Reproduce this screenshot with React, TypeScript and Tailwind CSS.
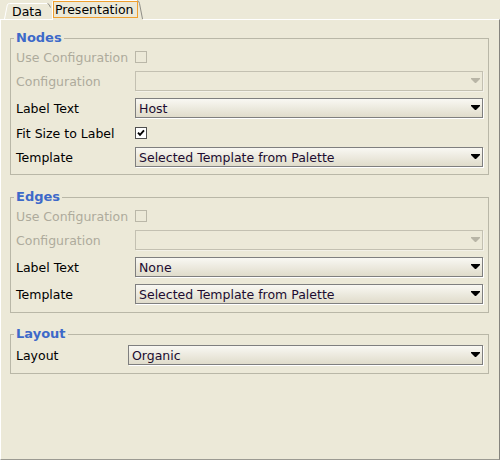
import React from 'react';

// Swing-style "Presentation" settings pane

function Arrow({ disabled }: { disabled?: boolean }) {
  return (
    <svg width="9" height="6" viewBox="0 0 9 6" className="shrink-0">
      <path d="M0 0H9V1L5 5H4L0 1Z" fill={disabled ? '#b8b5a6' : '#000000'} />
    </svg>
  );
}

function Combo({ value, disabled }: { value?: string; disabled?: boolean }) {
  return (
    <div
      className={`flex h-[20px] flex-1 items-center border pl-[3px] pr-[2px] ${
        disabled
          ? 'border-[#c3c0b1] shadow-[1px_1px_0_#f3f1e8]'
          : 'border-[#7f7f7f] bg-linear-to-b from-[#f9f8f3] to-[#e0dccb] shadow-[1px_1px_0_#ffffff]'
      }`}
    >
      <span className="flex-1 truncate text-[#200c30]">{value}</span>
      <Arrow disabled={disabled} />
    </div>
  );
}

function Check({ checked, disabled }: { checked?: boolean; disabled?: boolean }) {
  return (
    <div
      className={`flex h-[12px] w-[12px] items-center justify-center border ${
        disabled ? 'border-[#bab7a8]' : 'border-[#4f4f4f] bg-white'
      }`}
    >
      {checked && (
        <svg width="10" height="10" viewBox="0 0 10 10">
          <path d="M2 4.6L4 6.8L8 2.4" stroke="#000" strokeWidth="1.9" fill="none" />
        </svg>
      )}
    </div>
  );
}

function Row({
  label,
  disabled,
  labelWidth = 'w-[119px]',
  tall = true,
  children,
}: {
  label: string;
  disabled?: boolean;
  labelWidth?: string;
  tall?: boolean;
  children: React.ReactNode;
}) {
  return (
    <div className={`flex items-start ${tall ? 'h-[21px]' : 'h-[16px]'}`}>
      <div
        className={`${labelWidth} flex shrink-0 items-center ${tall ? 'h-[20px]' : 'h-[16px]'} ${
          disabled ? 'text-[#aeab9c]' : 'text-black'
        }`}
      >
        {label}
      </div>
      <div className={`flex flex-1 items-center ${tall ? 'h-[20px]' : 'h-[16px]'}`}>{children}</div>
    </div>
  );
}

function Group({
  title,
  className,
  children,
}: {
  title: string;
  className: string;
  children: React.ReactNode;
}) {
  return (
    <fieldset className={`border border-[#b9b7a7] pl-[5px] pr-[5px] pt-[3px] ${className}`}>
      <legend className="-ml-[2px] px-[2px] text-[13px] font-bold leading-[16px] text-[#3d69c9]">
        {title}
      </legend>
      <div className="flex flex-col gap-[6px]">{children}</div>
    </fieldset>
  );
}

export default function App() {
  return (
    <div className="h-[460px] w-[500px] bg-[#ece9d8] font-['DejaVu_Sans','Liberation_Sans',sans-serif] text-[12.5px] leading-[15px]">
      {/* tab strip */}
      <div className="flex h-[19px] items-end">
        <div className="relative ml-[4px] flex h-[16px] w-[48px] items-center pl-[8px]">
          <svg className="absolute left-0 top-0" width="48" height="16" viewBox="0 0 48 16">
            <path d="M0.5 16L3.3 2Q3.8 0.5 5.5 0.5H44" stroke="#ffffff" fill="none" />
            <path d="M43.5 0.5Q45.5 1 46.5 4.5" stroke="#8e8d86" fill="none" />
          </svg>
          <span className="relative text-black">Data</span>
        </div>
        <div className="relative z-10 -mb-[1px] flex h-[20px] w-[91px] items-start bg-[#ece9d8]">
          <svg className="absolute left-0 top-0" width="91" height="20" viewBox="0 0 91 20">
            <path d="M0.5 20L0.5 3Q0.5 0.5 2.5 0.5H85" stroke="#ffffff" fill="none" />
            <path d="M85.5 0.5Q87 1 87.5 3.5L90.5 19" stroke="#8e8d86" fill="none" />
          </svg>
          <div className="relative ml-[1px] mt-[1px] flex h-[17px] w-[85px] items-center border border-[#f0a030] pl-[1px] text-black">
            Presentation
          </div>
        </div>
      </div>

      {/* panel */}
      <div className="h-[441px] border-b border-l border-r border-t border-b-[#9b9a92] border-l-white border-r-[#85847e] border-t-white pl-[9px] pr-[10px] pt-[10px]">
        <Group title="Nodes" className="pb-[6px]">
          <Row label="Use Configuration" disabled tall={false}>
            <Check disabled />
          </Row>
          <Row label="Configuration" disabled>
            <Combo disabled />
          </Row>
          <Row label="Label Text">
            <Combo value="Host" />
          </Row>
          <Row label="Fit Size to Label" tall={false}>
            <Check checked />
          </Row>
          <Row label="Template">
            <Combo value="Selected Template from Palette" />
          </Row>
        </Group>

        <Group title="Edges" className="mt-[14px] pb-[7px]">
          <Row label="Use Configuration" disabled tall={false}>
            <Check disabled />
          </Row>
          <Row label="Configuration" disabled>
            <Combo disabled />
          </Row>
          <Row label="Label Text">
            <Combo value="None" />
          </Row>
          <Row label="Template">
            <Combo value="Selected Template from Palette" />
          </Row>
        </Group>

        <Group title="Layout" className="mt-[13px] pb-[7px]">
          <Row label="Layout" labelWidth="w-[112px]">
            <Combo value="Organic" />
          </Row>
        </Group>
      </div>
    </div>
  );
}
